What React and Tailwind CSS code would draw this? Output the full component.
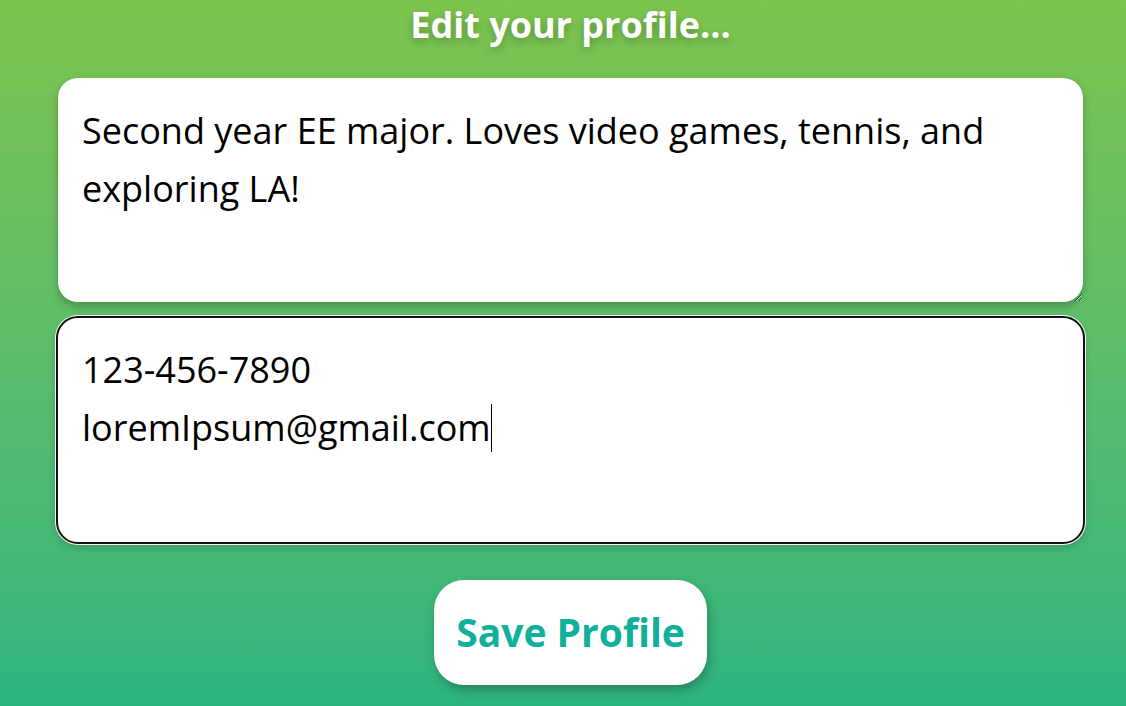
export default function App() {
  return (
    <div className="w-[1126px] h-[706px] overflow-hidden bg-gradient-to-b from-[#7dc44d] to-[#2cb47f] [font-family:'Open_Sans','Noto_Sans',sans-serif]">
      <div className="ml-[58px] w-[1025px] flex flex-col items-center">
        <h1 className="h-[52px] leading-[50px] text-[36px] font-bold text-white [text-shadow:0_4px_8px_rgba(0,0,0,0.25)]">
          Edit your profile...
        </h1>
        <textarea
          className="mt-[26px] w-full h-[224px] block rounded-[20px] bg-white p-6 text-[36px] leading-[58px] text-black outline-none shadow-[0_4px_8px_rgba(0,0,0,0.25)] [font-family:inherit]"
          defaultValue="Second year EE major. Loves video games, tennis, and exploring LA!"
        />
        <div className="mt-4 w-full h-[224px] rounded-[20px] bg-white px-6 py-[23px] text-[36px] leading-[58px] text-black outline-2 outline-[#101010] shadow-[0_0_0_3px_#ffffff,0_4px_8px_rgba(0,0,0,0.25)]">
          <div>123-456-7890</div>
          <div className="flex items-center">
            loremIpsum@gmail.com
            <span className="inline-block w-px h-[48px] bg-black" />
          </div>
        </div>
        <button className="mt-[38px] w-[273px] h-[105px] rounded-[30px] bg-white text-[39px] font-bold text-[#10b09a] shadow-[2px_5px_10px_rgba(0,0,0,0.25)]">
          Save Profile
        </button>
      </div>
    </div>
  );
}
